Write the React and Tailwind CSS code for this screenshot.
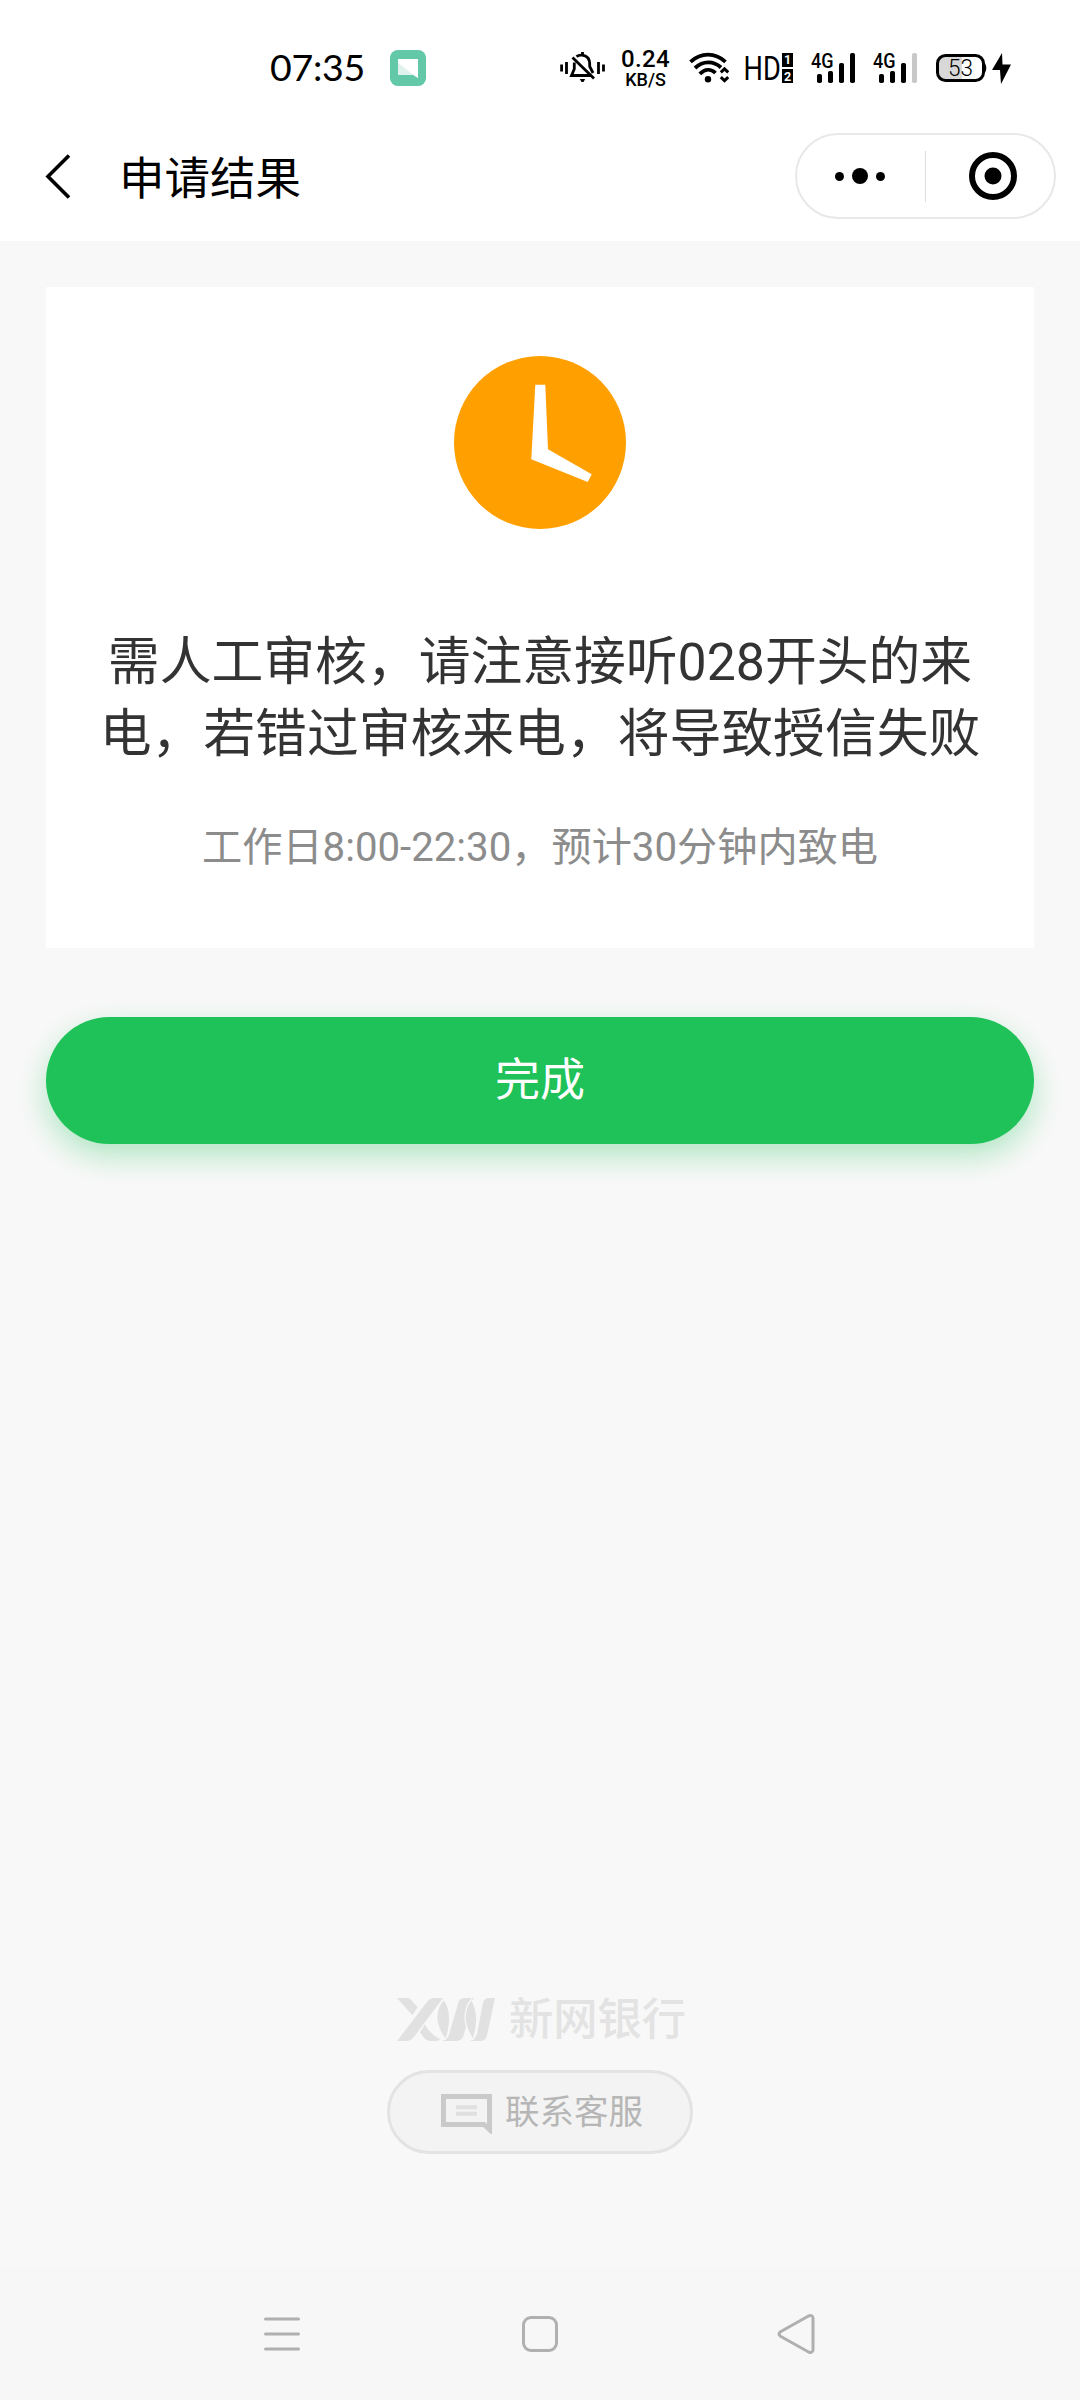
const SIGNALS = [
  { id: 'sim1', last: '#000' },
  { id: 'sim2', last: '#c8c8c8' },
]

function MessageBadge() {
  return (
    <svg className="ml-[26px]" width="36" height="36" viewBox="0 0 36 36">
      <rect width="36" height="36" rx="8" fill="#62c8a7" />
      <path d="M9 9h18a1 1 0 0 1 1 1v18l-5-3H9a1 1 0 0 1-1-1V10a1 1 0 0 1 1-1z" fill="#dff3ec" />
      <path d="M8 13v-3a1 1 0 0 1 1-1h18a1 1 0 0 1 1 1v18z" fill="#fff" />
    </svg>
  )
}

function MuteBell() {
  return (
    <svg width="46" height="32" viewBox="0 0 46 32" fill="none" stroke="#000" strokeWidth="2.8">
      <path d="M1.6 12.5v7M6.5 10v12M38.5 10v12M43.5 12.5v7" />
      <path d="M16.5 4.6C19 2.6 25 2.4 28 6c2 2.500 1.700 5.500 1.700 8.500L33 21" />
      <path d="M14.300 10.500V17L11.500 23.500H30" />
      <path d="M12.500 5.500L34 26.500" />
      <path d="M22.500 0v4" />
      <path d="M19.800 27h5.400l-1.700 3h-2z" fill="#000" stroke="none" />
    </svg>
  )
}

function Wifi() {
  return (
    <svg className="ml-5" width="41" height="32" viewBox="0 0 41 32" fill="none" stroke="#000" strokeWidth="3.8">
      <path d="M1.500 9.800C12 0.200 26 0.200 36.500 9.800" />
      <path d="M6 16C14 8.600 24.500 8.600 32 15.500" />
      <path d="M10.800 21.800C16 16.600 22 16.600 26.500 21" />
      <circle cx="19" cy="27.300" r="3.200" fill="#000" stroke="none" />
      <path d="M31.800 20.300L35.500 16.800L39.200 20.300M31.800 25.200L35.500 28.700L39.200 25.200" strokeWidth="3" />
    </svg>
  )
}

function HdVoice() {
  return (
    <svg className="ml-[14px] overflow-visible" width="50" height="32" viewBox="0 0 50 32" fontFamily="Roboto, sans-serif">
      <text transform="translate(-0.500 28) scale(0.800 1)" fontSize="34">HD</text>
      <rect x="38" y="1" width="11" height="14" />
      <rect x="38" y="17" width="11" height="14" />
      <text x="43.500" y="12.400" fontSize="12.500" fontWeight="700" fill="#fff" textAnchor="middle">1</text>
      <text x="43.500" y="28.600" fontSize="12.500" fontWeight="700" fill="#fff" textAnchor="middle">2</text>
    </svg>
  )
}

function Signal({ last }) {
  return (
    <svg className="overflow-visible" width="45" height="32" viewBox="0 0 45 32">
      <text x="0" y="16.300" fontSize="21" fontWeight="500" fontFamily="Roboto, sans-serif" textLength="22.500" lengthAdjust="spacingAndGlyphs">4G</text>
      <rect x="6" y="22" width="5" height="9" rx="1.800" />
      <rect x="17" y="19" width="5" height="12" rx="1.800" />
      <rect x="28" y="11" width="5" height="20" rx="1.800" />
      <rect x="39" y="1" width="5" height="30" rx="1.800" fill={last} />
    </svg>
  )
}

function Battery() {
  return (
    <svg className="ml-[18px]" width="76" height="32" viewBox="0 0 76 32">
      <path d="M11 3.500h15v25H11a8 8 0 0 1-8-8v-9a8 8 0 0 1 8-8z" fill="#d8d8d8" />
      <rect x="1.500" y="3.500" width="46" height="25" rx="8" fill="none" stroke="#000" strokeWidth="3" />
      <path d="M48 10.500c3 1.500 3 9.500 0 11z" />
      <text x="12" y="23.800" fontSize="23" fontWeight="300" fontFamily="Roboto, sans-serif" textLength="25" lengthAdjust="spacingAndGlyphs">53</text>
      <path d="M66 1L56 18h8l1 14L75 12.500h-8.500z" />
    </svg>
  )
}

function StatusBar() {
  return (
    <div className="flex h-[135px] items-center pl-[270px] pr-[68px]">
      <span className="-mt-0.5 w-[94px] whitespace-nowrap font-['Lato',sans-serif] text-[37.500px] leading-none tracking-[-0.3px]">07:35</span>
      <MessageBadge />
      <div className="ml-auto flex items-center">
        <MuteBell />
        <div className="ml-4 flex w-[47px] flex-col items-center font-['Roboto',sans-serif] font-medium">
          <span className="text-[24px] leading-[23px] tracking-[0.3px]">0.24</span>
          <span className="text-[18px] leading-[17px]">KB/S</span>
        </div>
        <Wifi />
        <HdVoice />
        <div className="ml-[17px] flex gap-[17px]">
          {SIGNALS.map(s => <Signal key={s.id} last={s.last} />)}
        </div>
        <Battery />
      </div>
    </div>
  )
}

function Header() {
  return (
    <div className="flex h-[106px] items-start pl-[45px] pr-6 pt-px">
      <svg className="mt-[18px]" width="26" height="46" viewBox="0 0 26 46" fill="none" stroke="#000" strokeWidth="3.600">
        <path d="M24 1.500L3 22.500L24 43.500" />
      </svg>
      <h1 className="ml-[48px] mt-[14px] text-[45.500px] leading-[60px] text-black">申请结果</h1>
      <div className="-mt-[3px] ml-auto flex h-[86px] w-[261px] items-center rounded-full border-2 border-[#e8e8e8]">
        <div className="flex w-[128px] items-center justify-center gap-2 pr-0.5">
          <i className="size-[9px] rounded-full bg-black" />
          <i className="size-4 rounded-full bg-black" />
          <i className="size-[9px] rounded-full bg-black" />
        </div>
        <i className="h-[51px] w-px bg-[#dedede]" />
        <div className="flex flex-1 justify-center pl-1.5">
          <svg width="48" height="48" viewBox="0 0 48 48">
            <circle cx="24" cy="24" r="21" fill="none" stroke="#000" strokeWidth="6" />
            <circle cx="24" cy="24" r="8.500" />
          </svg>
        </div>
      </div>
    </div>
  )
}

function ResultCard() {
  return (
    <section className="mx-[46px] mt-[46px] flex h-[661px] shrink-0 flex-col items-center bg-white pt-[69px]">
      <svg width="172" height="173" viewBox="0 0 172 173">
        <ellipse cx="86" cy="86.500" rx="86" ry="86.500" fill="#ffa000" />
        <path d="M81.300 28.700H91.300L94 93.300L137.700 118.300L133.700 126L77.300 103.300Z" fill="#fff" />
      </svg>
      <p className="mt-[98px] text-center text-[51.800px] leading-[72px] text-[#333]">
        需人工审核，请注意接听028开头的来
        <br />
        电，若错过审核来电，将导致授信失败
      </p>
      <p className="mt-[47px] text-[40.200px] leading-[60px] text-[#8c8c8c]">工作日8:00-22:30，预计30分钟内致电</p>
    </section>
  )
}

// lenses sit over the slanted bars, separated by a background-coloured outline
function BankLogo() {
  return (
    <div className="flex items-center pl-[3px]">
      <svg width="98" height="43" viewBox="0 0 294 129" fill="#e1e1e1">
        <path d="M0 0H30Q38 0 43 7L62 28L46 52Z" />
        <path d="M138 0H112Q98 0 90 12L0 129H28Q42 129 50 118Z" />
        <path d="M69 103L84 79Q98 109 130 123Q126 129 116 129H98Q88 129 82 121Z" />
        <path d="M184 14Q188 0 202 0H230L200 112Q195 129 178 129H136Q152 122 156 110Z" />
        <path d="M258 14Q262 0 276 0H294L270 112Q266 129 252 129H220Q236 120 240 108Z" />
        <g stroke="#f8f8f8" strokeWidth="4">
          <path d="M141 4Q160 30 158 70Q156 105 145 124Q122 94 119 60Q120 24 141 4Z" />
          <path d="M224 4Q241 34 239 70Q237 106 228 124Q207 96 204 60Q205 24 224 4Z" />
        </g>
      </svg>
      <span className="ml-[14px] mt-px text-[44.300px] font-medium leading-[40px] text-[#e3e3e3]">新网银行</span>
    </div>
  )
}

function Footer() {
  return (
    <footer className="flex flex-col items-center">
      <BankLogo />
      <button className="mt-[29px] flex h-[84px] w-[306px] items-center rounded-full border-[3px] border-[#e3e3e3] bg-[#f3f3f3] pl-[51px]">
        <svg className="mt-[3px]" width="51" height="40" viewBox="0 0 51 40" fill="none">
          <path d="M2.500 2.500H48.500V35.500L43 30.500H2.500Z" stroke="#cacaca" strokeWidth="5" />
          <path d="M15 13.300H36M15 19.800H36" stroke="#e0e0e0" strokeWidth="4" />
        </svg>
        <span className="-mt-px ml-[13px] whitespace-nowrap text-[34.500px] leading-[50px] text-[#b6b6b6]">联系客服</span>
      </button>
    </footer>
  )
}

function NavBar() {
  return (
    <nav className="flex h-[133px] items-center justify-between bg-[#f7f7f7] pl-[264px] pr-[265px]">
      <svg width="36" height="40" viewBox="0 0 36 40" stroke="#b0b0b0" strokeWidth="3" strokeLinecap="round">
        <path d="M1.500 5H34.500M1.500 20H34.500M1.500 35H34.500" />
      </svg>
      <svg className="ml-[3px]" width="36" height="40" viewBox="0 0 36 40" fill="none" stroke="#b0b0b0" strokeWidth="3">
        <rect x="1.500" y="3.500" width="33" height="33" rx="7.500" />
      </svg>
      <svg width="38" height="42" viewBox="0 0 38 42" fill="none" stroke="#b0b0b0" strokeWidth="3">
        <path d="M31.500 3L3.500 18.700Q0.500 21 3.500 23.300L31.500 39Q35.500 40.500 36 37V5Q35.500 1.500 31.500 3Z" />
      </svg>
    </nav>
  )
}

export default function App() {
  return (
    <div className="flex h-[2400px] w-[1080px] flex-col bg-[#f8f8f8] font-['Roboto','Noto_Sans_CJK_SC',sans-serif]">
      <header className="h-[241px] shrink-0 bg-white">
        <StatusBar />
        <Header />
      </header>
      <ResultCard />
      <button className="mx-[46px] mt-[69px] h-[127px] shrink-0 rounded-full bg-[#1ec258] text-[45px] text-white shadow-[0_12px_30px_rgba(30,194,88,0.33)]">
        完成
      </button>
      <div className="mt-auto pb-[113px]">
        <Footer />
      </div>
      <NavBar />
    </div>
  )
}
